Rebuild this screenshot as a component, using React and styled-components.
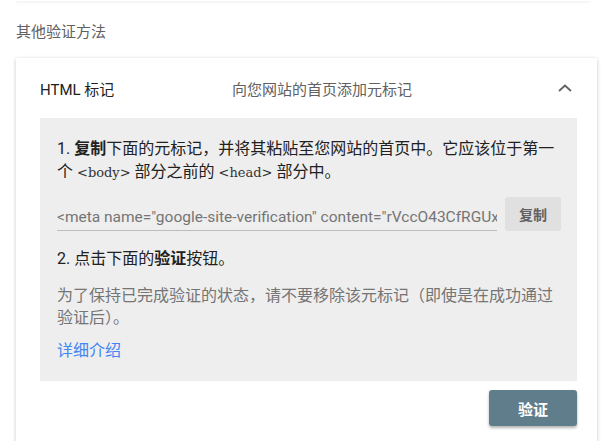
import React from "react";
import styled, { createGlobalStyle } from "styled-components";

const GlobalStyle = createGlobalStyle`
  html, body {
    margin: 0;
    padding: 0;
    background: #ffffff;
    font-family: Roboto, "Noto Sans CJK SC", sans-serif;
    overflow: hidden;
  }
`;

const Page = styled.div`
  width: 581px;
  margin-left: 16px;
  display: flex;
  flex-direction: column;
`;

// 위쪽 카드의 아래 끝만 보이는 부분
const PrevCardEdge = styled.div`
  height: 1px;
  margin-right: 7px;
  background: #fff;
  box-shadow: 0 1px 3px rgba(0, 0, 0, 0.14);
`;

const SectionTitle = styled.div`
  margin-top: 21px;
  font-size: 15px;
  line-height: 20px;
  color: #616161;
`;

const Card = styled.div`
  margin-top: 16px;
  background: #fff;
  box-shadow: 0 1px 4px rgba(0, 0, 0, 0.22);
  padding: 0 20px 20px 24px;
`;

const CardHeader = styled.div`
  height: 60px;
  display: flex;
  align-items: center;
`;

const HeaderTitle = styled.div`
  width: 192px;
  font-size: 15px;
  color: #212121;
`;

const HeaderDesc = styled.div`
  flex: 1;
  font-size: 15px;
  color: #616161;
`;

const Chevron = styled.div`
  width: 24px;
  height: 24px;
  display: flex;
  align-items: center;
  justify-content: center;
`;

const Panel = styled.div`
  background: #eeeeee;
  padding: 19px 16px 19px 17px;
  display: flex;
  flex-direction: column;
`;

const Step = styled.p`
  margin: ${(p) => p.$mt || 0}px 0 0;
  font-size: 16px;
  line-height: 23px;
  color: #212121;

  b {
    font-weight: 700;
  }
`;

const Code = styled.code`
  font-family: "DejaVu Serif", serif;
  font-size: 13px;
  color: #333;
`;

const MetaRow = styled.div`
  margin-top: 13px;
  display: flex;
  align-items: flex-end;
  gap: 8px;
`;

const MetaInput = styled.div`
  flex: 1;
  min-width: 0;
  white-space: nowrap;
  overflow: hidden;
  font-size: 15.5px;
  line-height: 20px;
  color: #757575;
  padding-bottom: 3px;
  border-bottom: 1px solid #bdbdbd;
`;

const CopyButton = styled.button`
  width: 56px;
  height: 34px;
  border: none;
  border-radius: 3px;
  background: #e0e0e0;
  color: #616161;
  font-family: Roboto, "Noto Sans CJK SC", sans-serif;
  font-size: 14px;
  font-weight: 700;
  padding: 0;
`;

const Note = styled.p`
  margin: 15px 0 0;
  font-size: 16px;
  line-height: 22px;
  color: #757575;
`;

const MoreLink = styled.a`
  margin-top: 11px;
  font-size: 16px;
  line-height: 22px;
  color: #4285f4;
  text-decoration: none;
`;

const ActionRow = styled.div`
  margin-top: 9px;
  display: flex;
  justify-content: flex-end;
`;

const VerifyButton = styled.button`
  width: 88px;
  height: 36px;
  border: none;
  border-radius: 3px;
  background: #607d8b;
  color: #fff;
  font-family: Roboto, "Noto Sans CJK SC", sans-serif;
  font-size: 15px;
  font-weight: 700;
  box-shadow: 0 2px 3px rgba(0, 0, 0, 0.3);
`;

const App = () => {
  return (
    <>
      <GlobalStyle />
      <Page>
        <PrevCardEdge />
        <SectionTitle>其他验证方法</SectionTitle>
        <Card>
          <CardHeader>
            <HeaderTitle>HTML 标记</HeaderTitle>
            <HeaderDesc>向您网站的首页添加元标记</HeaderDesc>
            <Chevron>
              <svg width="14" height="8" viewBox="0 0 14 8">
                <path d="M1 7 L7 1.5 L13 7" fill="none" stroke="#616161" strokeWidth="1.8" />
              </svg>
            </Chevron>
          </CardHeader>
          <Panel>
            <Step>
              1. <b>复制</b>下面的元标记，并将其粘贴至您网站的首页中。它应该位于第一个 <Code>&lt;body&gt;</Code> 部分之前的 <Code>&lt;head&gt;</Code> 部分中。
            </Step>
            <MetaRow>
              <MetaInput>
                &lt;meta name="google-site-verification" content="rVccO43CfRGUxk2pT8a1mQ" /&gt;
              </MetaInput>
              <CopyButton>复制</CopyButton>
            </MetaRow>
            <Step $mt={16}>
              2. 点击下面的<b>验证</b>按钮。
            </Step>
            <Note>为了保持已完成验证的状态，请不要移除该元标记（即使是在成功通过验证后）。</Note>
            <MoreLink href="#">详细介绍</MoreLink>
          </Panel>
          <ActionRow>
            <VerifyButton>验证</VerifyButton>
          </ActionRow>
        </Card>
      </Page>
    </>
  );
};

export default App;
